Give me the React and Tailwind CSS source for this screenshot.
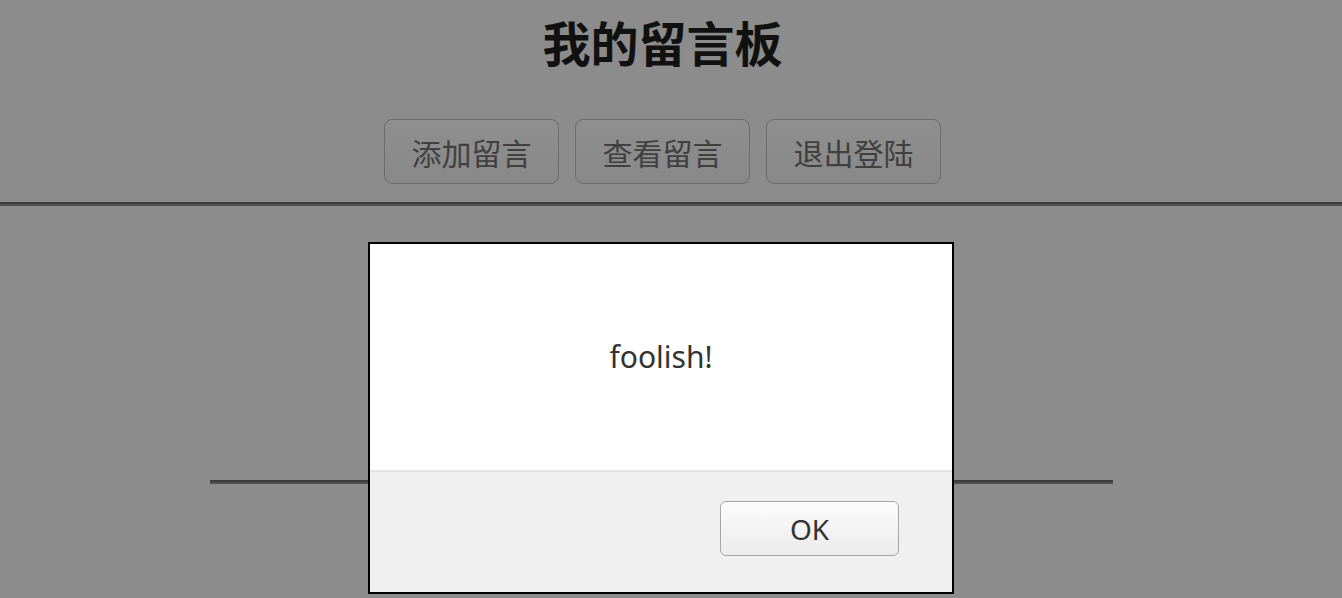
import React from 'react'

const navButtons = ['添加留言', '查看留言', '退出登陆']

const App = () => {
  return (
    <div
      className="relative w-[1342px] h-[598px] overflow-hidden bg-[#8c8c8c]"
      style={{ fontFamily: '"Noto Sans", "Noto Sans CJK SC", sans-serif' }}
    >
      {/* Page content (dimmed behind the alert) */}
      <div className="w-[1325px] flex flex-col items-center">
        <h1 className="pt-[17px] text-[48px] leading-[48px] font-bold text-[#111]" style={{ fontFamily: '"Noto Sans CJK SC", sans-serif' }}>
          我的留言板
        </h1>
        <div className="mt-[54px] flex gap-[16px]">
          {navButtons.map((label) => (
            <button
              key={label}
              className="w-[175px] h-[65px] rounded-[8px] border-[1.5px] border-[#6c6c6c] bg-gradient-to-b from-[#8f8f8f] to-[#888888] text-[30px] leading-none text-[#404040]"
              style={{ fontFamily: '"Noto Sans CJK SC", sans-serif' }}
            >
              {label}
            </button>
          ))}
        </div>
      </div>
      <div className="mt-[18px] h-[4px] w-full border-t-2 border-b-2 border-t-[#3c3c3c] border-b-[#505050]" />
      <div className="w-[1323px] flex justify-center">
        <div className="mt-[274px] w-[903px] h-[4px] border-t-2 border-b-2 border-t-[#3c3c3c] border-b-[#505050]" />
      </div>

      {/* Alert dialog */}
      <div className="absolute left-[368px] top-[242px] w-[586px] h-[352px] border-2 border-black bg-white flex flex-col">
        <div className="h-[228px] flex items-center justify-center border-b-2 border-[#e4e4e4]">
          <span className="text-[30px] text-[#333] -mt-[2px]">foolish!</span>
        </div>
        <div className="flex-1 bg-[#f0f0f0] flex justify-end items-start pt-[29px] pr-[53px]">
          <button className="w-[179px] h-[55px] rounded-[6px] border border-[#a6a6a6] bg-gradient-to-b from-[#fcfcfc] to-[#ebebeb] text-[28px] leading-none text-[#333]">
            OK
          </button>
        </div>
      </div>
    </div>
  )
}

export default App
